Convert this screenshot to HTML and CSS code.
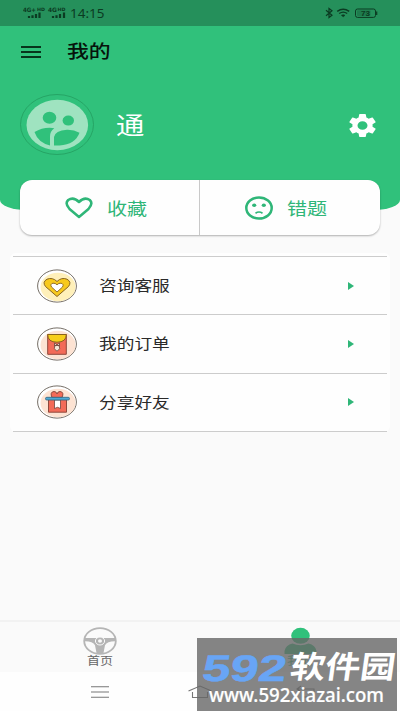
FILE: index.html
```html
<!DOCTYPE html>
<html lang="zh-CN">
<head>
<meta charset="utf-8">
<title>我的</title>
<link rel="stylesheet" href="styles.css">
</head>
<body>
<div class="screen">
  <header class="hero">
    <div class="status">
      <svg class="signal" width="50" height="12" viewBox="0 0 50 12">
        <g class="net"><text x="0" y="4.8" textLength="13" lengthAdjust="spacingAndGlyphs">4G+</text><text class="hd" x="14" y="3.600" textLength="8" lengthAdjust="spacingAndGlyphs">HD</text><text x="25" y="4.8" textLength="9" lengthAdjust="spacingAndGlyphs">4G</text><text class="hd" x="34.500" y="3.600" textLength="8" lengthAdjust="spacingAndGlyphs">HD</text></g>
        <path d="M6 9v2M9.500 8.200v2.800M13 7v4M16.500 5.500v5.500M30 9v2M33.500 8.200v2.800M37 7v4M41 5.500v5.500" stroke="#0b3b22" stroke-width="2.200"/>
      </svg>
      <span class="clock wide">14:15</span>
      <svg class="sys" width="54" height="12" viewBox="0 0 54 12">
        <path d="M1 3.2l6 5-3 2.3v-9l3 2.3-6 5" fill="none" stroke="#0b3b22" stroke-width="1.2"/>
        <g fill="none" stroke="#0b3b22" stroke-width="1.4"><path d="M12.2 4.4q6-4.2 12 0M14.2 6.5q4-2.8 8 0"/><path d="M16.4 8.3q1.8-1.2 3.6 0L18.2 9.8z" fill="#0b3b22" stroke-width=".6"/></g>
        <rect x="30.5" y="2" width="20" height="8.4" rx="2" fill="none" stroke="#0b3b22"/>
        <rect x="32" y="3.3" width="13.5" height="5.8" rx="1" fill="#0b3b22" opacity=".25"/>
        <path d="M51.7 4.5v3.5" stroke="#0b3b22" stroke-width="1.2"/>
        <text class="charge" x="36" y="8.800" textLength="9" lengthAdjust="spacingAndGlyphs">73</text>
      </svg>
    </div>
    <div class="appbar">
      <svg width="20" height="12" viewBox="0 0 20 12"><path d="M0 1h20M0 6h20M0 11h20" stroke="#07351c" stroke-width="1.9"/></svg>
      <h1 class="wide">我的</h1>
    </div>
    <div class="profile">
      <svg width="74" height="62" viewBox="0 0 74 62">
        <ellipse cx="37" cy="30.500" rx="36.5" ry="30" fill="none" stroke="#239d60" stroke-width=".8"/>
        <ellipse cx="37.3" cy="31" rx="30.8" ry="25.2" fill="#9fe3c0"/>
        <g fill="#30c17b"><ellipse cx="29.5" cy="23.8" rx="6.8" ry="6"/><ellipse cx="48.3" cy="26.6" rx="5.7" ry="5"/>
        <path d="M14.5 38q7-4.3 15-4.3 3 0 4.800.600-4.500 3.500-4.300 8.200v9Q18 48.500 14.500 38z"/>
        <path d="M34 51.500v-8.500q1-6.500 13-7.300 7-.2 12.500 3-4 11.500-20 12.800z"/></g>
      </svg>
      <span class="name wide">通</span>
      <svg class="gear" width="27" height="23" viewBox="2 2 20 20" preserveAspectRatio="none"><path fill="#fff" d="M19.430 12.980a7.800 7.800 0 0 0 0-1.960l2.110-1.650a.5.5 0 0 0 .12-.64l-2-3.460a.5.5 0 0 0-.61-.22l-2.490 1a7.300 7.300 0 0 0-1.690-.98l-.38-2.650A.5.5 0 0 0 14 2h-4a.5.5 0 0 0-.49.42l-.38 2.650a7.700 7.700 0 0 0-1.690.98l-2.490-1a.5.5 0 0 0-.61.22l-2 3.460a.5.5 0 0 0 .12.64l2.110 1.650a8 8 0 0 0 0 1.960l-2.110 1.650a.5.5 0 0 0-.12.64l2 3.460a.5.5 0 0 0 .61.220l2.490-1c.52.400 1.080.730 1.690.980l.38 2.650A.5.5 0 0 0 10 22h4a.5.5 0 0 0 .49-.42l.38-2.650a7.700 7.700 0 0 0 1.690-.98l2.490 1a.5.5 0 0 0 .61-.22l2-3.460a.5.5 0 0 0-.12-.64zM12 15.700a3.700 3.700 0 1 1 0-7.400 3.700 3.700 0 0 1 0 7.400z"/></svg>
    </div>
  </header>

  <section class="actions">
    <div class="action">
      <svg width="28" height="22" viewBox="0 0 28 22"><path d="M14 20L4.500 12Q-.5 6.500 3.200 3 8.500-.5 14 5 19.500-.5 24.800 3 28.500 6.500 23.500 12z" fill="none" stroke="#2fb678" stroke-width="2.500" stroke-linejoin="round"/></svg>
      <span class="wide">收藏</span>
    </div>
    <div class="action">
      <svg width="28" height="24" viewBox="0 0 28 24"><ellipse cx="14" cy="12" rx="12.700" ry="10.500" fill="none" stroke="#2fb678" stroke-width="2.500"/><g fill="#2fb678"><ellipse cx="9.200" cy="9.200" rx="2.100" ry="1.700"/><ellipse cx="18.800" cy="9.200" rx="2.100" ry="1.700"/></g><path d="M10.500 17.200q3.500-2.400 7 0" fill="none" stroke="#2fb678" stroke-width="1.700"/></svg>
      <span class="wide">错题</span>
    </div>
  </section>

  <ul class="menu">
    <li>
      <svg width="40" height="34" viewBox="0 0 40 34"><ellipse cx="20" cy="17" rx="19.400" ry="16.100" fill="#fff" stroke="#655d55" stroke-width=".9"/><ellipse cx="21" cy="18" rx="17.500" ry="14.200" fill="#fff0ba"/><path d="M20 27.500L8.500 17.500Q5 13 10 10.200 15.500 8 20 12.500 24.500 8 30 10.200 35 13 31.500 17.500z" fill="#f7c91d" stroke="#87631f" stroke-width="1"/><path d="M20 23l-5.500-5Q12.800 15 16 14.200q2.500-.2 4 1.600 1.500-1.800 4-1.600 3.200.8 1.500 3.800z" fill="#fff" stroke="#87631f" stroke-width=".9"/></svg>
      <span class="wide">咨询客服</span><i class="arrow"></i>
    </li>
    <li>
      <svg width="40" height="34" viewBox="0 0 40 34"><ellipse cx="20" cy="17" rx="19.400" ry="16.100" fill="#fff" stroke="#655d55" stroke-width=".9"/><ellipse cx="21" cy="18" rx="17.500" ry="14.200" fill="#fde3d3"/><path d="M10.700 7.500h18.600v19.800H10.700z" fill="#f36b58" stroke="#8e493c"/><path d="M10.700 7.500h18.600q0 7.700-9.300 7.700t-9.300-7.700z" fill="#f7ce1b" stroke="#87631f"/><path d="M17.500 16l5 3.200v-3.200l-5 3.200zM18 18.500h4l.8 3.200-2.800 2.500-2.800-2.500z" fill="#f4e5d5" stroke="#70443b" stroke-width=".8"/></svg>
      <span class="wide">我的订单</span><i class="arrow"></i>
    </li>
    <li>
      <svg width="40" height="34" viewBox="0 0 40 34"><ellipse cx="20" cy="17" rx="19.400" ry="16.100" fill="#fff" stroke="#655d55" stroke-width=".9"/><ellipse cx="21" cy="18" rx="17.500" ry="14.200" fill="#fde3d3"/><path d="M20 12.500h-5Q12.500 7 17 6.500q2.500 0 3 2.500.5-2.500 3-2.500 4.500.5 2 6z" fill="#f36b58" stroke="#8e493c"/><path d="M11.500 14h18v13.200h-18z" fill="#f36b58" stroke="#8e493c"/><path d="M17.500 15h6v8.500l-3-1.200-3 1.200z" fill="#fff" stroke="#70443b" stroke-width=".8"/><rect x="8.500" y="12.300" width="24" height="2.700" rx="1.300" fill="#4fa9d5" stroke="#30627c" stroke-width=".8"/></svg>
      <span class="wide">分享好友</span><i class="arrow"></i>
    </li>
  </ul>

  <nav class="tabs">
    <div class="tab">
      <svg width="34" height="28" viewBox="0 0 34 28"><ellipse cx="17" cy="14" rx="15.800" ry="12.900" fill="none" stroke="#b5b5b5" stroke-width="1.800"/><path d="M2 11h30v3.200q-8 .2-10 4l-1.600 8.300h-6.800L12 18.200q-2-3.800-10-4z" fill="#b5b5b5"/><ellipse cx="17" cy="14" rx="4.600" ry="4" fill="#b5b5b5" stroke="#fafafa" stroke-width="1"/><ellipse cx="17" cy="14" rx="2" ry="1.700" fill="#fafafa"/></svg>
      <span class="wide">首页</span>
    </div>
    <div class="tab active">
      <svg width="34" height="28" viewBox="0 0 34 28"><ellipse cx="17.500" cy="8.800" rx="9.300" ry="8" fill="#30c17b"/><path d="M1.500 27v-3q1-6 8-7.500 8 3.500 16 0 7 1.500 8 7.500v3z" fill="#30c17b"/></svg>
      <span class="wide">我的</span>
    </div>
  </nav>
  <div class="system-nav">
    <svg width="20" height="14" viewBox="0 0 20 14"><path d="M1 1.700h18M1 7h18M1 12.300h18" stroke="#777" stroke-width="1.100"/></svg>
    <svg class="home" width="26" height="14" viewBox="0 0 26 14"><path d="M1.500 6L13 1l11.500 5M5.500 7v5.500h15V7" fill="none" stroke="#777" stroke-width="1.100"/></svg>
    <svg width="20" height="14" viewBox="0 0 20 14"><path d="M5 1L1 4l4 3M1 4h17v8H6" fill="none" stroke="#777" stroke-width="1.100"/></svg>
  </div>

  <svg class="watermark" width="200" height="73" viewBox="0 0 200 73">
    <rect width="200" height="73" fill="#666" fill-opacity=".8"/>
    <text class="brand-num" transform="translate(4 42.500) skewX(-8)" textLength="84" lengthAdjust="spacingAndGlyphs">592</text>
    <text class="brand" transform="translate(92 40) skewX(-8)" textLength="105" lengthAdjust="spacingAndGlyphs">软件园</text>
    <text class="site" x="12" y="63.500" textLength="175" lengthAdjust="spacingAndGlyphs">www.592xiazai.com</text>
  </svg>
</div>
</body>
</html>
```
FILE: styles.css
```css
* { box-sizing: border-box; }
body {
  margin: 0;
  background: #fafafa;
  font-family: "Liberation Sans", "Noto Sans CJK SC", sans-serif;
}
svg { display: block; flex: none; }
.screen {
  position: relative;
  display: flex;
  flex-direction: column;
  width: 400px;
  height: 711px;
  overflow: hidden;
}
/* Labels use a horizontally expanded face. */
.wide {
  display: inline-block;
  transform: scaleX(1.18);
  transform-origin: left center;
  white-space: nowrap;
}
.hero {
  flex: none;
  height: 210px;
  background: #30c17b;
  border-radius: 0 0 26px 26px / 0 0 10px 10px;
}
.status {
  display: flex;
  align-items: center;
  height: 26px;
  padding: 0 21px 0 23px;
  background: #25905b;
  color: #0b3b22;
}
.net { font: bold 6px "DejaVu Sans", sans-serif; fill: #0b3b22; }
.hd { font-size: 4.500px; }
.clock {
  margin-left: -3px;
  font: 12px "Noto Sans", sans-serif;
  transform: scaleX(1.12);
}
.sys { margin-left: auto; }
.charge { font: bold 7px "Liberation Sans", sans-serif; fill: #0b3b22; }
.appbar {
  display: flex;
  align-items: center;
  gap: 26px;
  height: 51px;
  padding-left: 21px;
}
h1 {
  margin: 0;
  font-size: 18.500px;
  line-height: 24px;
  font-weight: 500;
  color: #06130b;
}
.profile {
  display: flex;
  align-items: center;
  height: 96px;
  padding: 0 24.500px 0 20px;
}
.name {
  margin-left: 22px;
  padding-top: 2px;
  color: #fff;
  font-size: 24px;
  line-height: 32px;
}
.gear { margin-left: auto; }
.actions {
  display: flex;
  flex: none;
  z-index: 1;
  height: 55px;
  margin: -30px 20px 0;
  background: #fefefe;
  border-radius: 12px;
  box-shadow: 0 1px 2px rgba(0, 0, 0, .3);
}
.action {
  display: flex;
  flex: none;
  width: 179px;
  align-items: center;
  gap: 14px;
  padding-left: 45px;
  color: #2fb678;
  font-size: 17px;
}
.action + .action { width: 181px; border-left: 1px solid #c9c9c9; }
.menu {
  flex: none;
  margin: 18px 10px 0;
  padding: 3px 3px 0;
  list-style: none;
  background: #fefefe;
  border-radius: 6px;
}
.menu li {
  display: flex;
  align-items: center;
  height: 58.500px;
  padding: 0 33px 0 24px;
  border-top: 1px solid #ccc;
  color: #2a2a2a;
  font-size: 15px;
}
.menu li:first-child { height: 58px; }
.menu li:last-child { height: 59.500px; border-bottom: 1px solid #ccc; }
.menu span { margin-left: 22px; padding-bottom: 2px; }
.arrow {
  margin-left: auto;
  border: solid transparent;
  border-width: 4.500px 0 4.500px 6px;
  border-left-color: #2fb678;
}
.tabs {
  display: flex;
  flex: none;
  height: 52px;
  margin-top: auto;
  border-top: 2px solid #f2f2f2;
}
.tab {
  display: flex;
  flex: 1;
  flex-direction: column;
  align-items: center;
  padding-top: 5px;
  color: #666;
  font-size: 11px;
  line-height: 13px;
}
.tab .wide { transform-origin: center; }
.active { color: #30c17b; }
.system-nav {
  display: flex;
  flex: none;
  align-items: flex-start;
  justify-content: space-between;
  height: 39px;
  padding: 13px 84px 0 90px;
  background: #fefefe;
}
.home { margin-right: 7px; }
.watermark { position: absolute; z-index: 2; left: 197px; bottom: 0; }
.brand-num { font: bold 37px "Liberation Sans", sans-serif; fill: #68a5f5; stroke: #68a5f5; stroke-width: .5; }
.brand { font: 700 31px "Noto Sans CJK SC", sans-serif; fill: #fff; }
.site { font: 500 19px "Noto Sans", sans-serif; fill: #fff; stroke: #fff; stroke-width: .2; }
```
